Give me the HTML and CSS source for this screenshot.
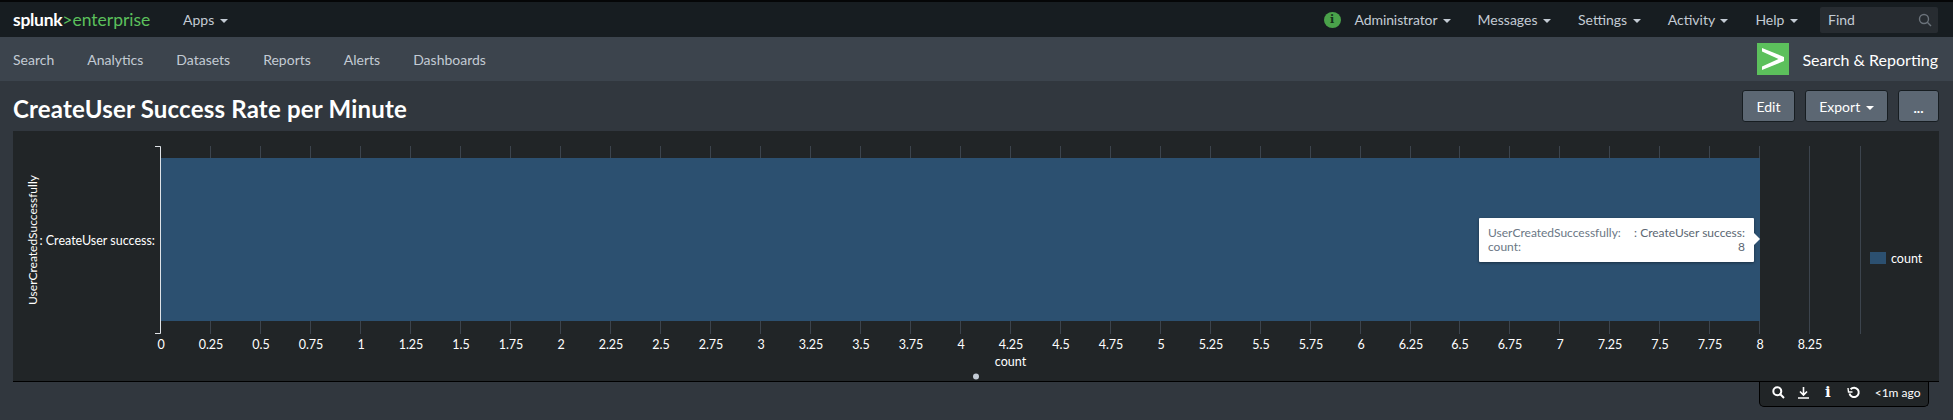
FILE: index.html
```html
<!DOCTYPE html>
<html lang="en">
<head>
  <meta charset="UTF-8">
  <meta name="viewport" content="width=device-width, initial-scale=1.0">
  <title>CreateUser Success Rate per Minute</title>
  <link rel="stylesheet" href="styles.css">
</head>
<body>
  <header class="nav">
    <div class="brand"><b>splunk</b><span>&gt;enterprise</span></div>
    <a class="nav-link">Apps <i class="caret"></i></a>
    <div class="nav-right">
      <span class="status">i</span>
      <a class="nav-link admin">Administrator <i class="caret"></i></a>
      <a class="nav-link">Messages <i class="caret"></i></a>
      <a class="nav-link">Settings <i class="caret"></i></a>
      <a class="nav-link">Activity <i class="caret"></i></a>
      <a class="nav-link">Help <i class="caret"></i></a>
      <div class="find">
        <span>Find</span>
        <svg width="14" height="14" viewBox="0 0 14 14" fill="none" stroke="#6b737b" stroke-width="1.4"><circle cx="6" cy="6" r="4.5"/><path d="M9.3 9.3L13 13"/></svg>
      </div>
    </div>
  </header>

  <div class="appbar">
    <a>Search</a>
    <a>Analytics</a>
    <a>Datasets</a>
    <a>Reports</a>
    <a>Alerts</a>
    <a>Dashboards</a>
    <div class="app-name">
      <svg width="32" height="32" viewBox="0 0 32 32"><rect width="32" height="32" fill="#5cc05c"/><path d="M5 5L27 14V18L5 27V23.500L21.500 16L5 8.500Z" fill="#fff"/></svg>
      <span>Search &amp; Reporting</span>
    </div>
  </div>

  <main>
    <div class="title-row">
      <h1>CreateUser Success Rate per Minute</h1>
      <div class="actions">
        <button class="edit">Edit</button>
        <button class="export">Export <i class="caret light"></i></button>
        <button class="more">...</button>
      </div>
    </div>

    <section class="panel">
      <svg class="chart" width="1926" height="250" viewBox="0 1 1926 250">
        <path class="grid" d="M147.5 16V204M197.5 16V204M247.5 16V204M297.5 16V204M347.5 16V204M397.5 16V204M447.5 16V204M497.5 16V204M547.5 16V204M597.5 16V204M647.5 16V204M697.5 16V204M747.5 16V204M797.5 16V204M847.5 16V204M897.5 16V204M947.5 16V204M997.5 16V204M1047.5 16V204M1097.5 16V204M1147.5 16V204M1197.5 16V204M1247.5 16V204M1297.5 16V204M1347.5 16V204M1397.5 16V204M1446.5 16V204M1496.5 16V204M1546.5 16V204M1596.5 16V204M1646.5 16V204M1696.5 16V204M1746.5 16V204M1796.5 16V204M1847.5 16V204"/>
        <rect class="bar" x="147.5" y="28" width="1599.5" height="163"/>
        <path class="axis" d="M142 16.500H147.500V203.500H142"/>
        <text class="axis-title" transform="translate(24 110) rotate(-90)" text-anchor="middle">UserCreatedSuccessfully</text>
        <text x="142" y="115" text-anchor="end">: CreateUser success:</text>
        <g text-anchor="middle">
          <text x="148" y="219">0</text>
          <text x="198" y="219">0.25</text>
          <text x="248" y="219">0.5</text>
          <text x="298" y="219">0.75</text>
          <text x="348" y="219">1</text>
          <text x="398" y="219">1.25</text>
          <text x="448" y="219">1.5</text>
          <text x="498" y="219">1.75</text>
          <text x="548" y="219">2</text>
          <text x="598" y="219">2.25</text>
          <text x="648" y="219">2.5</text>
          <text x="698" y="219">2.75</text>
          <text x="748" y="219">3</text>
          <text x="798" y="219">3.25</text>
          <text x="848" y="219">3.5</text>
          <text x="898" y="219">3.75</text>
          <text x="948" y="219">4</text>
          <text x="998" y="219">4.25</text>
          <text x="1048" y="219">4.5</text>
          <text x="1098" y="219">4.75</text>
          <text x="1148" y="219">5</text>
          <text x="1198" y="219">5.25</text>
          <text x="1248" y="219">5.5</text>
          <text x="1298" y="219">5.75</text>
          <text x="1348" y="219">6</text>
          <text x="1398" y="219">6.25</text>
          <text x="1447" y="219">6.5</text>
          <text x="1497" y="219">6.75</text>
          <text x="1547" y="219">7</text>
          <text x="1597" y="219">7.25</text>
          <text x="1647" y="219">7.5</text>
          <text x="1697" y="219">7.75</text>
          <text x="1747" y="219">8</text>
          <text x="1797" y="219">8.25</text>
          <text x="997.500" y="236">count</text>
        </g>
        <circle class="handle" cx="963" cy="246.500" r="3"/>
        <rect class="bar" x="1857" y="122" width="16" height="12"/>
        <text x="1878" y="133">count</text>
      </svg>

      <div class="tooltip">
        <div class="tip-row"><span>UserCreatedSuccessfully:</span><span class="tip-value">: CreateUser success:</span></div>
        <div class="tip-row"><span>count:</span><span class="tip-value">8</span></div>
      </div>
    </section>

    <div class="toolbar">
      <svg width="13" height="13" viewBox="0 0 13 13" fill="none" stroke="#fff" stroke-width="2"><circle cx="5.300" cy="5.300" r="4"/><path d="M8.300 8.300L12 12"/></svg>
      <svg width="13" height="13" viewBox="0 0 13 13" fill="none" stroke="#fff" stroke-width="1.600"><path d="M6.500 1V8M3 5.500L6.500 9L10 5.500M1 12H12"/></svg>
      <span class="tool-info">i</span>
      <svg class="tool-refresh" width="14" height="13" viewBox="0 0 14 13" fill="none" stroke="#fff" stroke-width="2"><path d="M3.600 3.200A4.700 4.700 0 1 1 2.500 7.500"/><path d="M1 2L1.500 6H5.500" stroke-width="1.400"/></svg>
      <span class="ago">&lt;1m ago</span>
    </div>
  </main>
</body>
</html>
```

FILE: styles.css
```css
* {
  box-sizing: border-box;
}
body {
  margin: 0;
  height: 420px;
  overflow: hidden;
  background: #31373e;
  color: #fff;
  font-family: Lato, "Liberation Sans", sans-serif;
  font-size: 14px;
}
.nav {
  display: flex;
  align-items: center;
  height: 37px;
  padding: 0 15px 0 13px;
  border-top: 2px solid #050607;
  background: #171d21;
}
.brand {
  width: 170px;
  font-size: 17.5px;
  white-space: nowrap;
}
.brand b {
  color: #fff;
  letter-spacing: -0.3px;
}
.brand span {
  color: #5cc05c;
}
.nav-link {
  color: #c3cbd4;
  white-space: nowrap;
}
.caret {
  display: inline-block;
  width: 0;
  height: 0;
  margin-left: 2px;
  vertical-align: 2px;
  border-left: 4px solid transparent;
  border-right: 4px solid transparent;
  border-top: 4px solid #c3cbd4;
}
.caret.light {
  border-top-color: #fff;
}
.nav-right {
  display: flex;
  align-items: center;
  gap: 27px;
  margin-left: auto;
}
.status {
  width: 17px;
  height: 16px;
  margin-right: -13px;
  border-radius: 50%;
  background: #4aa24a;
  color: #12301a;
  font: bold 11px/16px "DejaVu Serif", serif;
  text-align: center;
}
.admin {
  letter-spacing: -0.1px;
}
.find {
  display: flex;
  align-items: center;
  justify-content: space-between;
  width: 118px;
  height: 26px;
  margin-left: -5px;
  padding: 0 6px 0 8px;
  border-radius: 2px;
  background: #272c31;
  color: #c3cbd4;
}
.appbar {
  display: flex;
  align-items: center;
  gap: 33px;
  height: 44px;
  padding: 0 15px 0 13px;
  background: #3c444d;
  color: #c3cbd4;
}
.app-name {
  display: flex;
  align-items: center;
  gap: 13px;
  margin-left: auto;
  color: #fff;
  font-size: 16px;
}
main {
  padding: 0 14px 0 13px;
}
.title-row {
  display: flex;
  align-items: center;
  justify-content: space-between;
  height: 50px;
}
h1 {
  margin: 5px 0 0;
  font-size: 24px;
  font-weight: 700;
  letter-spacing: 0.2px;
  line-height: 30px;
}
.actions {
  display: flex;
  gap: 10px;
}
button {
  height: 32px;
  padding: 0;
  border: 1px solid #171d21;
  border-radius: 3px;
  background: #5c6773;
  color: #fff;
  font: inherit;
}
.edit {
  width: 53px;
}
.export {
  width: 83px;
}
.more {
  width: 41px;
  padding-top: 3px;
  font-weight: 700;
}
.panel {
  position: relative;
  height: 251px;
  border-bottom: 1px solid #000;
  background: #212527;
}
.chart {
  display: block;
  font-size: 12.5px;
}
.chart text {
  fill: #fff;
}
.chart .axis-title {
  font-size: 12px;
}
.grid {
  fill: none;
  stroke: #3c444d;
}
.bar {
  fill: #2c5070;
}
.axis {
  fill: none;
  stroke: #dfe3e7;
}
.handle {
  fill: #c3cbd4;
}
.tooltip {
  position: absolute;
  left: 1466px;
  top: 87px;
  width: 275px;
  height: 44px;
  padding: 8px 9px;
  border-radius: 1px;
  background: #fff;
  box-shadow: 0 1px 3px rgba(0, 0, 0, 0.4);
  color: #6b7785;
  font-size: 12px;
  line-height: 14px;
  white-space: nowrap;
}
.tooltip::after {
  content: "";
  position: absolute;
  left: 100%;
  top: 15px;
  border-left: 6px solid #fff;
  border-top: 6px solid transparent;
  border-bottom: 6px solid transparent;
}
.tip-row {
  display: flex;
  justify-content: space-between;
}
.tip-value {
  color: #5c6773;
}
.toolbar {
  display: flex;
  align-items: center;
  gap: 12px;
  width: 170px;
  height: 25px;
  margin-left: auto;
  margin-right: 10px;
  padding: 0 0 3px 12px;
  border: 1px solid #000;
  border-top: none;
  border-radius: 0 0 5px 5px;
  background: #212527;
  font-size: 12px;
  white-space: nowrap;
}
.tool-info {
  margin-left: 3px;
  font: bold 15px/13px "DejaVu Serif", serif;
}
.tool-refresh {
  margin-left: 4px;
}
.ago {
  margin-left: 2px;
}
```
